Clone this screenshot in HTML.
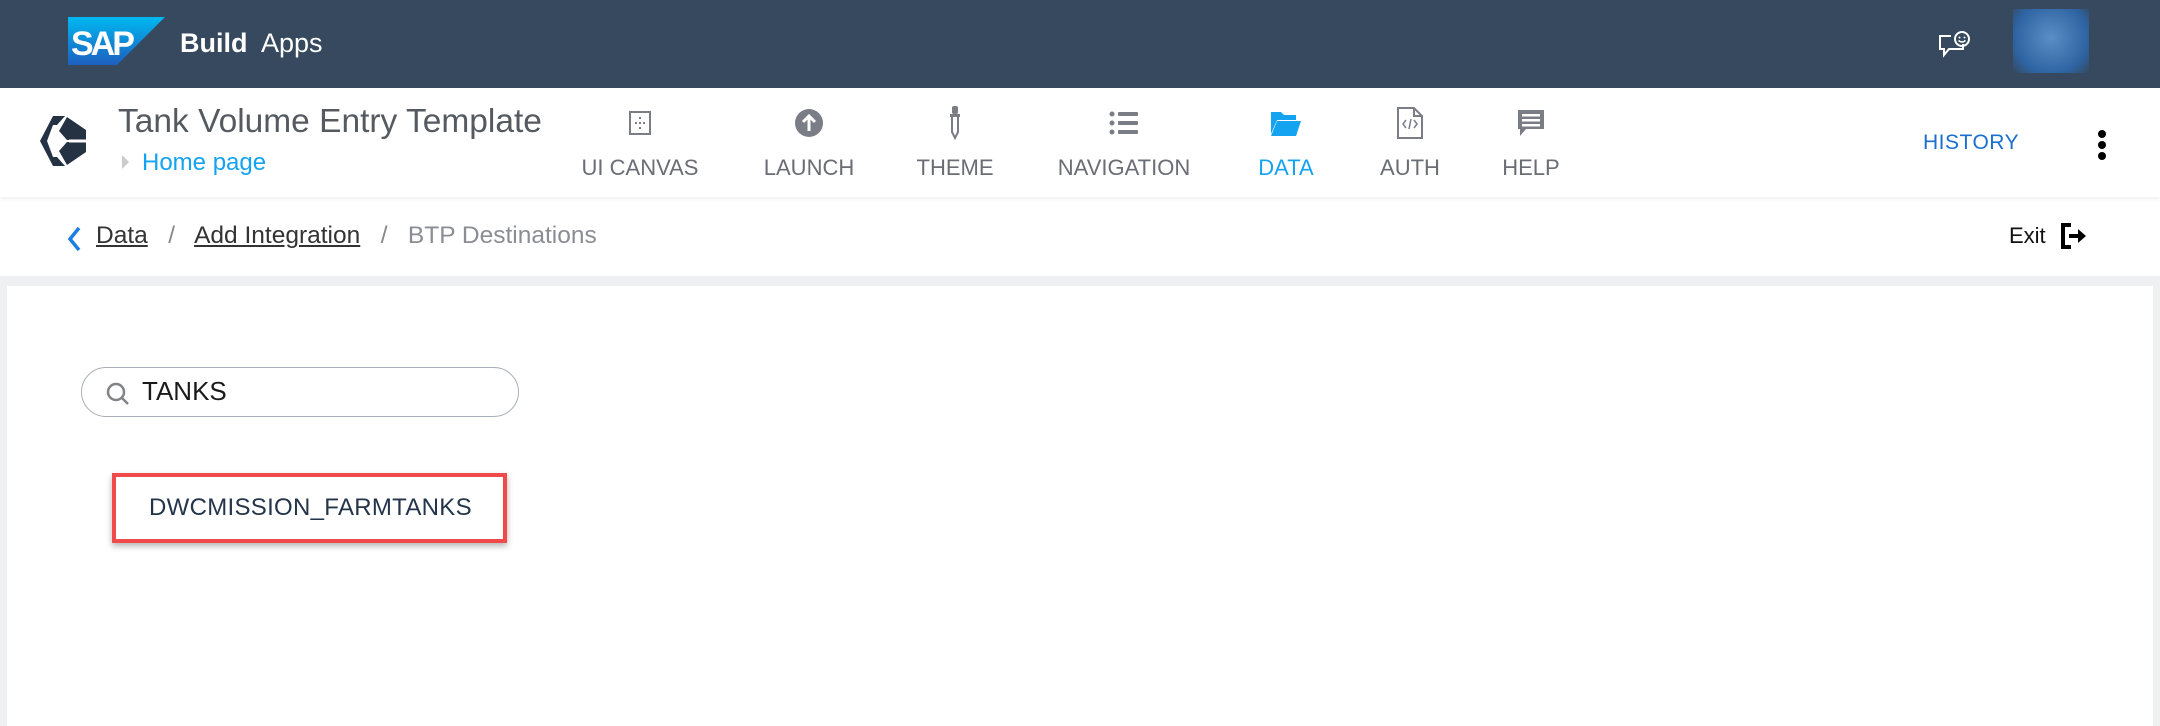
<!DOCTYPE html>
<html><head><meta charset="utf-8"><style>
*{margin:0;padding:0;box-sizing:border-box}
body{width:2160px;height:726px;overflow:hidden;background:#fff;font-family:"Liberation Sans",sans-serif;position:relative}
.abs{position:absolute}
.top{left:0;top:0;width:2160px;height:88px;background:#36495e}
.bar2{left:0;top:88px;width:2160px;height:109px;background:#fff;box-shadow:0 2px 4px rgba(0,0,0,.06)}
.nav{top:106px;width:170px;text-align:center;color:#6a6d74;font-size:22px}
.nav .ic{height:34px;display:flex;align-items:center;justify-content:center;margin-bottom:15px}
.band{left:0;top:276px;width:2160px;height:450px;background:#eff0f2}
.panel{left:7px;top:286px;width:2146px;height:440px;background:#fff}
</style></head><body>
<div class="abs top"></div>
<svg class="abs" style="left:68px;top:17px" width="97" height="48" viewBox="0 0 97 48"><defs><linearGradient id="g" x1="0" y1="0" x2="0" y2="1"><stop offset="0" stop-color="#00b8f1"/><stop offset="1" stop-color="#1e5fbf"/></linearGradient></defs><polygon points="0,0 97,0 49,48 0,48" fill="url(#g)"/><text x="3" y="38" font-family="Liberation Sans" font-weight="bold" font-size="34" fill="#fff" letter-spacing="-3">SAP</text></svg>
<div class="abs" style="left:180px;top:28px;color:#fff;font-size:27px"><b>Build</b>&nbsp; Apps</div>
<svg class="abs" style="left:1937px;top:30px" width="34" height="30" viewBox="0 0 34 30"><path d="M14 6H3v13h4v6l5-6h14v-5" fill="none" stroke="#fff" stroke-width="2"/><circle cx="25" cy="9" r="7" fill="none" stroke="#fff" stroke-width="2"/><circle cx="22.5" cy="7.5" r="1" fill="#fff"/><circle cx="27.5" cy="7.5" r="1" fill="#fff"/><path d="M21.5 10.5q3.5 3 7 0" fill="none" stroke="#fff" stroke-width="1.5"/></svg>
<div class="abs" style="left:2013px;top:9px;width:76px;height:64px;background:radial-gradient(circle at 50% 45%,#5b8ec4,#2e64a3 70%,#36495e)"></div>

<div class="abs bar2"></div>
<svg class="abs" style="left:40px;top:116px" width="46" height="50" viewBox="0 0 46 50"><path d="M13 0h12l-8 9h-4L7 25l6 16h4l8 9H13L0 25z" fill="#253244"/><path d="M27 1l19 13v10H27l-8-9z" fill="#253244"/><path d="M19 35l8-9h19v10L27 49z" fill="#253244"/><path d="M29 25h17" stroke="#fff" stroke-width="3"/></svg>
<div class="abs" style="left:118px;top:103px;font-size:33.5px;color:#555a61">Tank Volume Entry Template</div>
<div class="abs" style="left:122px;top:155px;width:0;height:0;border-top:7px solid transparent;border-bottom:7px solid transparent;border-left:7px solid #ccc"></div>
<div class="abs" style="left:142px;top:149px;font-size:24px;color:#14a3f0">Home page</div>

<div class="abs nav" style="left:555px"><div class="ic"><svg width="22" height="24" viewBox="0 0 22 24"><rect x="1" y="1" width="20" height="22" fill="none" stroke="#7a7d85" stroke-width="2"/><g fill="#7a7d85"><rect x="10" y="6" width="2" height="2"/><rect x="10" y="11" width="2" height="2"/><rect x="10" y="16" width="2" height="2"/><rect x="6" y="11" width="2" height="2"/><rect x="14" y="11" width="2" height="2"/></g></svg></div>UI CANVAS</div>
<div class="abs nav" style="left:724px"><div class="ic"><svg width="28" height="28" viewBox="0 0 28 28"><circle cx="14" cy="14" r="14" fill="#7a7d85"/><path d="M14 22V7M8 13l6-6 6 6" stroke="#fff" stroke-width="3" fill="none"/></svg></div>LAUNCH</div>
<div class="abs nav" style="left:870px"><div class="ic"><svg width="14" height="34" viewBox="0 0 14 34"><rect x="4" y="0" width="6" height="8" rx="2" fill="#7a7d85"/><rect x="2" y="8" width="10" height="3" fill="#7a7d85"/><path d="M4 11v15l3 6 3-6V11" fill="none" stroke="#7a7d85" stroke-width="2"/></svg></div>THEME</div>
<div class="abs nav" style="left:1039px"><div class="ic"><svg width="30" height="26" viewBox="0 0 30 26"><g fill="#7a7d85"><circle cx="3" cy="4" r="2.5"/><circle cx="3" cy="13" r="2.5"/><circle cx="3" cy="22" r="2.5"/><rect x="9" y="2" width="20" height="4" rx="1"/><rect x="9" y="11" width="20" height="4" rx="1"/><rect x="9" y="20" width="20" height="4" rx="1"/></g></svg></div>NAVIGATION</div>
<div class="abs nav" style="left:1201px;color:#14a3f0"><div class="ic"><svg width="30" height="26" viewBox="0 0 30 26"><path d="M0 2h10l3 3h12v5H6L0 24z" fill="#14a3f0"/><path d="M6 11h24l-5 15H0z" fill="#14a3f0"/></svg></div>DATA</div>
<div class="abs nav" style="left:1325px"><div class="ic"><svg width="26" height="32" viewBox="0 0 26 32"><path d="M1 1h16l8 8v22H1z" fill="none" stroke="#7a7d85" stroke-width="2"/><path d="M17 1v8h8" fill="none" stroke="#7a7d85" stroke-width="2"/><path d="M9 13l-3 4 3 4M17 13l3 4-3 4M14 12l-2 10" fill="none" stroke="#7a7d85" stroke-width="1.5"/></svg></div>AUTH</div>
<div class="abs nav" style="left:1446px"><div class="ic"><svg width="28" height="28" viewBox="0 0 28 28"><path d="M1 1h26v19H9l-6 7v-7H1z" fill="#7a7d85"/><g fill="#fff"><rect x="5" y="5" width="18" height="2.5"/><rect x="5" y="10" width="18" height="2.5"/><rect x="5" y="15" width="18" height="2.5"/></g></svg></div>HELP</div>

<div class="abs" style="left:1923px;top:131px;font-size:21px;color:#1a6fd0;letter-spacing:.5px">HISTORY</div>
<div class="abs" style="left:2098px;top:130px;width:10px"><div style="width:8px;height:8px;border-radius:50%;background:#000;margin-bottom:3px"></div><div style="width:8px;height:8px;border-radius:50%;background:#000;margin-bottom:3px"></div><div style="width:8px;height:8px;border-radius:50%;background:#000"></div></div>

<svg class="abs" style="left:67px;top:226px" width="14" height="26" viewBox="0 0 14 26"><path d="M12 2L3 13l9 11" fill="none" stroke="#1a7fe0" stroke-width="3.5"/></svg>
<div class="abs" style="left:96px;top:222px;font-size:24.5px;color:#333;white-space:pre"><span style="text-decoration:underline">Data</span>   <span style="color:#888">/</span>   <span style="text-decoration:underline">Add Integration</span>   <span style="color:#888">/</span>   <span style="color:#8a8d93">BTP Destinations</span></div>
<div class="abs" style="left:2009px;top:223px;font-size:22px;color:#111">Exit</div>
<svg class="abs" style="left:2061px;top:223px" width="28" height="26" viewBox="0 0 28 26"><path d="M10 2H2v22h8" fill="none" stroke="#000" stroke-width="4"/><path d="M8 13h12" stroke="#000" stroke-width="4"/><path d="M17 6l8 7-8 7z" fill="#000"/></svg>

<div class="abs band"></div>
<div class="abs panel"></div>
<div class="abs" style="left:81px;top:367px;width:438px;height:50px;border:1.5px solid #a9aebb;border-radius:25px"></div>
<svg class="abs" style="left:105px;top:381px" width="26" height="26" viewBox="0 0 26 26"><circle cx="11" cy="11" r="8" fill="none" stroke="#808387" stroke-width="2.5"/><path d="M17 17l6 6" stroke="#808387" stroke-width="2.5"/></svg>
<div class="abs" style="left:142px;top:376px;font-size:26px;color:#1a1a1a">TANKS</div>
<div class="abs" style="left:112px;top:473px;width:395px;height:70px;border:4px solid #f04a4a;box-shadow:0 3px 6px rgba(0,0,0,.3);background:#fff"></div>
<div class="abs" style="left:149px;top:494px;font-size:24px;color:#24344a;letter-spacing:.3px">DWCMISSION_FARMTANKS</div>
</body></html>
